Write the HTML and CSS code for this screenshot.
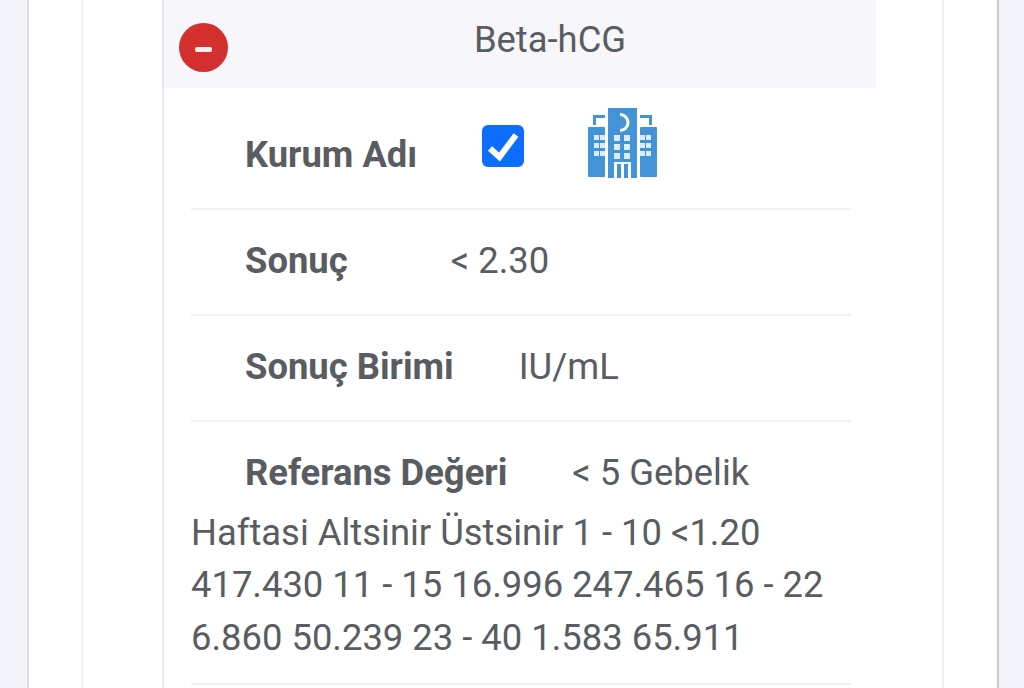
FILE: index.html
```html
<!DOCTYPE html>
<html lang="en">
<head>
  <meta charset="UTF-8">
  <meta name="viewport" content="width=device-width, initial-scale=1.0">
  <title>Beta-hCG</title>
  <link rel="stylesheet" href="styles.css">
</head>
<body>
  <div class="outer">
    <div class="inner">
      <div class="panel">
        <div class="panel-head">
          <span class="collapse-btn"><span class="minus"></span></span>
          <span class="panel-title">Beta-hCG</span>
        </div>
        <ul class="rows">
          <li class="row row-first">
            <b class="label label-kurum">Kurum Adı</b>
            <svg class="check" viewBox="0 0 42 42" aria-hidden="true">
              <rect width="42" height="42" rx="6" fill="#0d6efd"/>
              <path d="M8 23.5l9.5 8.5L34 10" fill="none" stroke="#fff" stroke-width="6"/>
            </svg>
            <svg class="hospital" viewBox="0 0 69 70" aria-hidden="true">
              <g fill="#4394d6">
                <rect x="0" y="19" width="17" height="50" rx="1"/>
                <rect x="52" y="19" width="17" height="50" rx="1"/>
                <rect x="20" y="0" width="29" height="70"/>
                <path d="M5 17V7h12v3H8v7zM64 17V7H52v3h9v7z"/>
              </g>
              <path d="M32 6.5A8 8 0 1 1 32 22.5" fill="none" stroke="#fff" stroke-width="3"/>
              <g fill="#dcecf8">
                <rect x="26" y="27" width="6" height="6"/><rect x="36" y="27" width="6" height="6"/>
                <rect x="26" y="36" width="6" height="6"/><rect x="36" y="36" width="6" height="6"/>
                <rect x="26" y="45" width="6" height="6"/><rect x="36" y="45" width="6" height="6"/>
                <rect x="6" y="27" width="5" height="5"/><rect x="12" y="27" width="5" height="5"/>
                <rect x="6" y="35" width="5" height="5"/><rect x="12" y="35" width="5" height="5"/>
                <rect x="6" y="43" width="5" height="5"/><rect x="12" y="43" width="5" height="5"/>
                <rect x="52" y="27" width="5" height="5"/><rect x="58" y="27" width="5" height="5"/>
                <rect x="52" y="35" width="5" height="5"/><rect x="58" y="35" width="5" height="5"/>
                <rect x="52" y="43" width="5" height="5"/><rect x="58" y="43" width="5" height="5"/>
              </g>
              <g fill="#fff">
                <rect x="26" y="54" width="17" height="2"/>
                <rect x="26" y="56" width="3" height="14"/><rect x="33" y="56" width="3" height="14"/><rect x="40" y="56" width="3" height="14"/>
              </g>
            </svg>
          </li>
          <li class="row"><b class="label label-sonuc">Sonuç</b>&lt; 2.30</li>
          <li class="row"><b class="label label-birim">Sonuç Birimi</b>IU/mL</li>
          <li class="row row-ref"><b class="label label-ref">Referans Değeri</b>&lt; 5 Gebelik Haftasi Altsinir Üstsinir 1 - 10 &lt;1.20 417.430 11 - 15 16.996 247.465 16 - 22 6.860 50.239 23 - 40 1.583 65.911</li>
        </ul>
      </div>
    </div>
  </div>
</body>
</html>
```

FILE: styles.css
```css
html, body {
  height: 100%;
}
body {
  margin: 0;
  overflow: hidden;
  font-family: Roboto, "Liberation Sans", sans-serif;
  color: #595d62;
  background: #f3f4f9;
  padding: 0 25px 0 27px;
}
.outer {
  height: 100%;
  background: #fff;
  border-left: 2px solid #dcdde0;
  border-right: 2px solid #c9cacd;
  padding: 0 53px 0 52px;
}
.inner {
  height: 100%;
  border-left: 2px solid #eeeff1;
  border-right: 2px solid #eeeff1;
  padding: 0 66px 0 79px;
}
.panel {
  height: 100%;
  border-left: 2px solid #e6e8ec;
}
.panel-head {
  position: relative;
  height: 88px;
  background: #f7f7fb;
  padding-left: 60px;
  text-align: center;
  font-size: 36.4px;
  line-height: 79px;
}
.collapse-btn {
  position: absolute;
  left: 15px;
  top: 23px;
  width: 49px;
  height: 49px;
  border-radius: 50%;
  background: #d32f2f;
  display: flex;
  align-items: center;
  justify-content: center;
}
.minus {
  width: 17px;
  height: 5px;
  margin-top: 4px;
  border-radius: 2px;
  background: #fbeeee;
}
.rows {
  list-style: none;
  margin: 0;
  padding: 0 25px 0 27px;
}
.row {
  padding: 25px 0 21px;
  border-bottom: 2px solid #f1f1f3;
  font-size: 36.4px;
  line-height: 52.5px;
}
.row-first {
  display: flex;
  align-items: flex-start;
  height: 122px;
  padding: 20px 0 0;
  box-sizing: border-box;
}
.row-ref {
  padding-bottom: 19px;
}
.label {
  display: inline-block;
  font-weight: 700;
  margin-left: 54px;
  padding-bottom: 5.5px;
}
.label-kurum { margin-top: 21px; }
.label-sonuc { margin-right: 103px; }
.label-birim { margin-right: 65px; }
.label-ref { margin-right: 65px; padding-bottom: 7px; }
.check {
  flex: none;
  width: 42px;
  height: 42px;
  margin: 17px 0 0 65px;
}
.hospital {
  flex: none;
  width: 69px;
  height: 70px;
  margin-left: 64px;
}
```
